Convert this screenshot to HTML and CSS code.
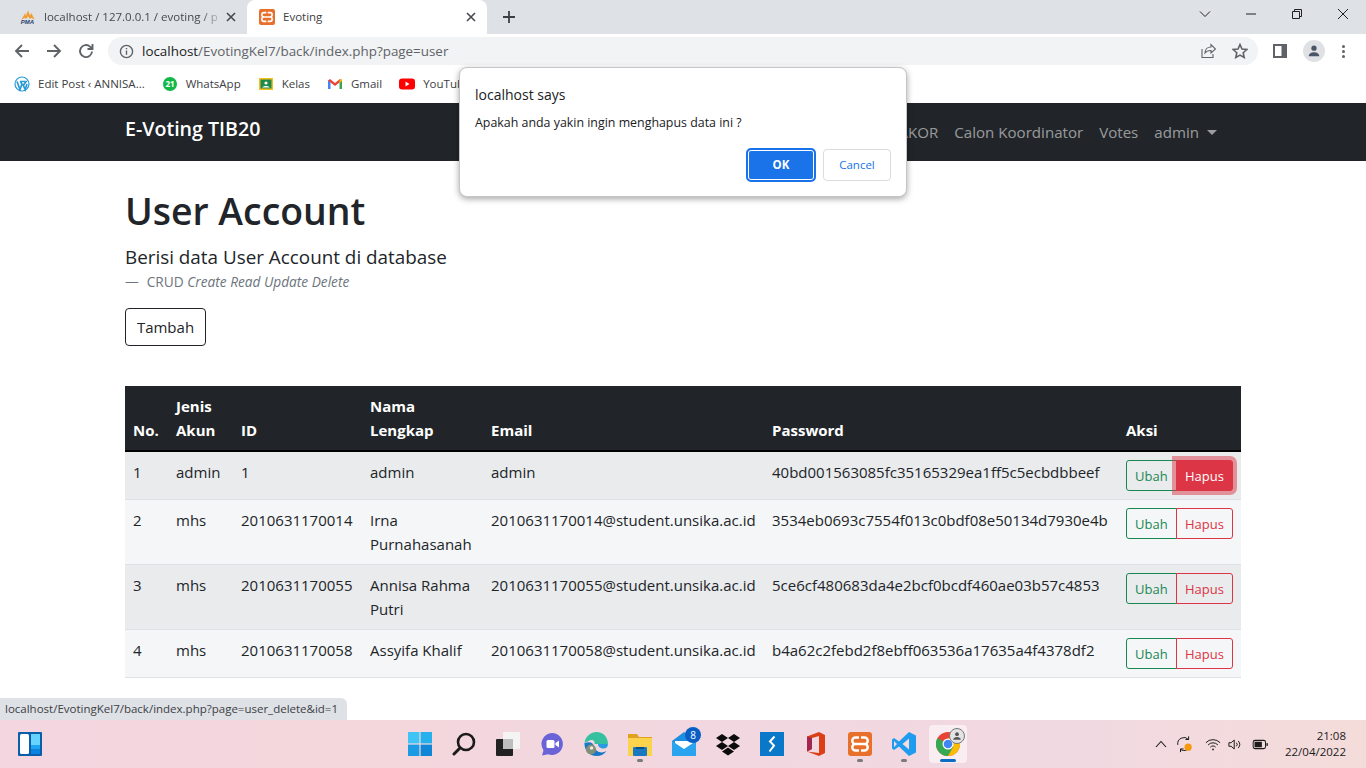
FILE: index.html
```html
<!DOCTYPE html>
<html lang="en">
<head>
    <meta charset="UTF-8">
    <title>Evoting</title>
    <link rel="stylesheet" href="styles.css">
</head>
<body>
<div class="screen">
    <div class="tabstrip">
        <div class="tab">
            <svg class="ico16" viewBox="0 0 24 24"><path d="M2 16 8 6l1 5 3-9 3 8 2-4 5 10-5-3-2 2-3-4-3 4-2-2z" fill="#f29b2e"/><text x="1" y="23" class="pma-text">PMA</text></svg>
            <span class="tab-title fade">localhost / 127.0.0.1 / evoting / p</span>
            <svg class="tab-x" viewBox="0 0 10 10"><path d="M1 1l8 8M9 1l-8 8"/></svg>
        </div>
        <div class="tab tab-active">
            <svg class="ico16" viewBox="0 0 24 24"><rect width="24" height="24" rx="3" fill="#e8702a"/><path class="xampp-mark" d="M11 5.500H7.500a3 3 0 0 0 0 6.500 3 3 0 0 0 0 6.500H11M13 5.500h3.500a3 3 0 0 1 0 6.500 3 3 0 0 1 0 6.500H13M7.500 12h9"/></svg>
            <span class="tab-title">Evoting</span>
            <svg class="tab-x" viewBox="0 0 10 10"><path d="M1 1l8 8M9 1l-8 8"/></svg>
        </div>
        <svg class="tab-new" viewBox="0 0 12 12"><path d="M6 0v12M0 6h12"/></svg>
        <div class="win-controls">
            <svg class="win-ico" viewBox="0 0 12 12"><path d="M1 3.500l5 5 5-5"/></svg>
            <svg class="win-ico" viewBox="0 0 12 12"><path d="M1 6h10"/></svg>
            <svg class="win-ico" viewBox="0 0 12 12"><path d="M1.500 3.500h7v7h-7zM3.500 3.500V1.500h7v7H8.500"/></svg>
            <svg class="win-ico" viewBox="0 0 12 12"><path d="M1 1l10 10M11 1L1 11"/></svg>
        </div>
    </div>

    <div class="toolbar">
        <svg class="tool-ico" viewBox="0 0 16 16"><path d="M15 8H2M8 2L2 8l6 6"/></svg>
        <svg class="tool-ico" viewBox="0 0 16 16"><path d="M1 8h13M8 2l6 6-6 6"/></svg>
        <svg class="tool-ico" viewBox="0 0 16 16"><path d="M14 8.500A6 6 0 1 1 12 3.600L14 5.500M14.500 1v5h-5"/></svg>
        <div class="omnibox">
            <svg class="info-ico" viewBox="0 0 16 16"><circle cx="8" cy="8" r="6.500"/><path d="M8 7v4.500M8 4.200v1.400"/></svg>
            <span class="url"><b>localhost</b>/EvotingKel7/back/index.php?page=user</span>
            <svg class="omni-share" viewBox="0 0 16 16"><path d="M2 6v8.500h11V11M5 10c0-4 3-6 6-6V1.500L15.500 6 11 10V7.500c-3 0-5 1-6 2.500z"/></svg>
            <svg class="omni-star" viewBox="0 0 16 16"><path d="M8 1.500l2 4.500 4.800.5-3.600 3.200 1 4.800L8 12.100l-4.200 2.400 1-4.800L1.200 6.500 6 6z"/></svg>
        </div>
        <svg class="side-ico" viewBox="0 0 14 14"><path d="M0 0h14v14H0z" fill="#5f6368"/><path d="M2 2h6.500v10H2z" fill="#fff"/></svg>
        <div class="avatar">
            <svg viewBox="0 0 16 16"><circle cx="8" cy="4.800" r="3"/><path d="M2 14c0-3 3-4.500 6-4.500s6 1.500 6 4.500z"/></svg>
        </div>
        <div class="kebab"><i></i><i></i><i></i></div>
    </div>

    <div class="bookmarks">
        <div class="bookmark">
            <svg class="ico16" viewBox="0 0 16 16"><circle cx="8" cy="8" r="7" fill="none" stroke="#2a9ad6" stroke-width="1.200"/><path d="M3 5.500l3 8 1.800-5-1-3H12l-2 3-1 0 2.200 5L13 8" fill="none" stroke="#2a9ad6" stroke-width="1.700"/></svg>
            <span>Edit Post ‹ ANNISA...</span>
        </div>
        <div class="bookmark">
            <svg class="ico16" viewBox="0 0 16 16"><circle cx="8" cy="8" r="7" fill="#12b847"/><text x="8" y="10.800" class="wa-text">21</text></svg>
            <span>WhatsApp</span>
        </div>
        <div class="bookmark">
            <svg class="ico16" viewBox="0 0 16 16"><rect x="1" y="2" width="14" height="12" fill="#f7bf1e"/><rect x="2.500" y="3.500" width="11" height="9" fill="#20894a"/><circle cx="8" cy="7" r="1.600" fill="#fff"/><path d="M4.500 11.500c0-2 7-2 7 0z" fill="#fff"/></svg>
            <span>Kelas</span>
        </div>
        <div class="bookmark">
            <svg class="ico16" viewBox="0 0 16 16"><path d="M1 13V4l2.500 2v7z" fill="#4285f4"/><path d="M15 13V4l-2.500 2v7z" fill="#34a853"/><path d="M1 4.500 3 3l5 4 5-4 2 1.500L8 10z" fill="#ea4335"/><path d="M12.500 4l2.500-1v2l-2.500 2z" fill="#fbbc04"/></svg>
            <span>Gmail</span>
        </div>
        <div class="bookmark">
            <svg class="ico16" viewBox="0 0 16 16"><rect y="2.500" width="16" height="11" rx="3" fill="#f00"/><path d="M6.500 5.500v5l4-2.500z" fill="#fff"/></svg>
            <span>YouTube</span>
        </div>
    </div>

    <div class="page">
        <nav class="topnav">
            <div class="container topnav-inner">
                <a class="brand">E-Voting TIB20</a>
                <div class="nav-links">
                    <a>Calon KAKOR</a>
                    <a>Calon Koordinator</a>
                    <a>Votes</a>
                    <a class="nav-drop">admin</a>
                </div>
            </div>
        </nav>

        <main class="container">
            <h1>User Account</h1>
            <p class="lead">Berisi data User Account di database</p>
            <p class="caption"><span class="dash">—</span>CRUD <em>Create Read Update Delete</em></p>
            <a class="btn-add">Tambah</a>

            <table class="data-table">
                <colgroup>
                    <col class="c-no"><col class="c-type"><col class="c-id"><col class="c-name"><col class="c-mail"><col class="c-pass"><col class="c-act">
                </colgroup>
                <thead>
                    <tr><th>No.</th><th>Jenis Akun</th><th>ID</th><th>Nama Lengkap</th><th>Email</th><th>Password</th><th>Aksi</th></tr>
                </thead>
                <tbody>
                    <tr>
                        <td>1</td><td>admin</td><td>1</td><td>admin</td><td>admin</td>
                        <td>40bd001563085fc35165329ea1ff5c5ecbdbbeef</td>
                        <td><div class="btn-group"><a class="btn-edit">Ubah</a><a class="btn-del is-hover">Hapus</a></div></td>
                    </tr>
                    <tr>
                        <td>2</td><td>mhs</td><td>2010631170014</td><td>Irna Purnahasanah</td><td>2010631170014@student.unsika.ac.id</td>
                        <td>3534eb0693c7554f013c0bdf08e50134d7930e4b</td>
                        <td><div class="btn-group"><a class="btn-edit">Ubah</a><a class="btn-del">Hapus</a></div></td>
                    </tr>
                    <tr>
                        <td>3</td><td>mhs</td><td>2010631170055</td><td>Annisa Rahma Putri</td><td>2010631170055@student.unsika.ac.id</td>
                        <td>5ce6cf480683da4e2bcf0bcdf460ae03b57c4853</td>
                        <td><div class="btn-group"><a class="btn-edit">Ubah</a><a class="btn-del">Hapus</a></div></td>
                    </tr>
                    <tr>
                        <td>4</td><td>mhs</td><td>2010631170058</td><td>Assyifa Khalif</td><td>2010631170058@student.unsika.ac.id</td>
                        <td>b4a62c2febd2f8ebff063536a17635a4f4378df2</td>
                        <td><div class="btn-group"><a class="btn-edit">Ubah</a><a class="btn-del">Hapus</a></div></td>
                    </tr>
                </tbody>
            </table>
        </main>
        <div class="status-bubble">localhost/EvotingKel7/back/index.php?page=user_delete&amp;id=1</div>
    </div>

    <div class="taskbar">
        <div class="task-left">
            <svg class="task-ico" viewBox="0 0 24 24"><rect width="24" height="24" rx="1" fill="#0a5fa8"/><rect x="2" y="2" width="9" height="20" rx="1.500" fill="#fff"/><rect x="13" y="2" width="9" height="11" fill="#66d4ff"/><rect x="13" y="13" width="9" height="4.500" fill="#1ea3f2"/><rect x="13" y="17.500" width="9" height="4.500" fill="#0a84e0"/></svg>
        </div>
        <div class="task-center">
            <div class="task-item"><svg class="task-ico" viewBox="0 0 24 24"><rect width="11.400" height="11.400" fill="#3fc4f5"/><rect x="12.600" width="11.400" height="11.400" fill="#27b0ee"/><rect y="12.600" width="11.400" height="11.400" fill="#1a9be4"/><rect x="12.600" y="12.600" width="11.400" height="11.400" fill="#0f86d6"/></svg></div>
            <div class="task-item"><svg class="task-ico" viewBox="0 0 24 24"><circle cx="14" cy="10" r="8" fill="none" stroke="#1b1b1b" stroke-width="2.600"/><path d="M8 16l-6 6" stroke="#1b1b1b" stroke-width="3" stroke-linecap="round"/></svg></div>
            <div class="task-item"><svg class="task-ico" viewBox="0 0 24 24"><rect x="0" y="7" width="17" height="17" rx="1" fill="#222"/><rect x="7" y="0" width="17" height="17" rx="1" fill="#f4f4f4"/><rect x="7" y="7" width="10" height="10" fill="#bdbdbd"/></svg></div>
            <div class="task-item"><svg class="task-ico" viewBox="0 0 24 24"><path d="M12 1a11 11 0 1 1-4 21.300L2 23.500l1.500-5.300A11 11 0 0 1 12 1z" fill="#6a63d8"/><rect x="6.500" y="8" width="8" height="8" rx="1.500" fill="#fff"/><path d="M15.500 11l3.500-2.500v7L15.500 13z" fill="#fff"/></svg></div>
            <div class="task-item"><svg class="task-ico" viewBox="0 0 24 24"><path d="M0.500 11C1.500 4 7 0 12.500 0 19.500 0 24 5.500 24 12H10.500c1-3-2-5-5-3.500-2 1-4 1.500-5 2.500z" fill="#35c1a0"/><path d="M24 12c0 3-2 4.500-4.500 4.500-3 0-5.500-1.500-5.500-4.500z" fill="#2a9be0"/><path d="M0.500 11c-.5 7 5 13 12 13 4.500 0 8-2 10-5-5 3-11 1-12.500-5-1-3-4-5-9.500-3z" fill="#1678c8"/><circle cx="7" cy="17.500" r="5" fill="#7f8f78"/><circle cx="7.500" cy="16" r="1.800" fill="#e9e9e0"/></svg></div>
            <div class="task-item has-dot"><svg class="task-ico" viewBox="0 0 24 24"><path d="M0 2h9l2 3h13v5H0z" fill="#e0a020"/><rect y="6" width="24" height="18" fill="#fbd34d"/><rect x="5" y="15" width="14" height="9" rx="1" fill="#1a78c2"/><rect x="8" y="15" width="8" height="2" fill="#0a4f8a"/></svg></div>
            <div class="task-item"><svg class="task-ico" viewBox="0 0 24 24"><path d="M0 9 12 0l12 9v15H0z" fill="#1c8fe0"/><path d="M3 9h18v6l-9 5-9-5z" fill="#fff"/><path d="M0 9l12 8 12-8v15H0z" fill="#2aa4ef"/></svg><span class="badge">8</span></div>
            <div class="task-item"><svg class="task-ico" viewBox="0 0 24 24"><path d="M6 2l6 4-6 4-6-4zM18 2l6 4-6 4-6-4zM6 10l6 4-6 4-6-4zM18 10l6 4-6 4-6-4zM6 19.500l6-4 6 4-6 4z" fill="#0c0c0c"/></svg></div>
            <div class="task-item"><svg class="task-ico" viewBox="0 0 24 24"><rect width="24" height="24" fill="#0a78c8"/><path d="M14.500 4.500 10 9.500l4 4-4.500 6" fill="none" stroke="#fff" stroke-width="2"/></svg></div>
            <div class="task-item"><svg class="task-ico" viewBox="0 0 24 24"><path d="M3 4.500 15 0l6 3v18l-6 3-12-4.500 12 1.500V4L8 6v11l-5 2.500z" fill="#dc3e15"/><path d="M3 4.500 8 6v11l-5 2.500z" fill="#a3264f"/></svg></div>
            <div class="task-item has-dot"><svg class="task-ico" viewBox="0 0 24 24"><rect width="24" height="24" rx="3" fill="#e8702a"/><path class="xampp-mark" d="M11 5.500H7.500a3 3 0 0 0 0 6.500 3 3 0 0 0 0 6.500H11M13 5.500h3.500a3 3 0 0 1 0 6.500 3 3 0 0 1 0 6.500H13M7.500 12h9"/></svg></div>
            <div class="task-item has-dot"><svg class="task-ico" viewBox="0 0 24 24"><path d="M17 0l7 3.500v17L17 24 7 14.500 2 18l-2-1.500V7.500L2 6l5 3.500z" fill="#1f9cf0"/><path d="M17 6.500 10.500 12l6.500 5.500zM2 9v6l3-3z" fill="#f4dbe0"/></svg></div>
            <div class="task-item is-active"><svg class="task-ico" viewBox="0 0 24 24"><circle cx="12" cy="12" r="12" fill="#ea4335"/><path d="M12 12 1.600 6A12 12 0 0 0 12 24l6-10z" fill="#34a853"/><path d="M12 6h10.400A12 12 0 0 1 12 24l5.200-9z" fill="#fbbc04"/><circle cx="12" cy="12" r="5.500" fill="#fff"/><circle cx="12" cy="12" r="4.300" fill="#4285f4"/></svg><span class="profile-badge"><svg viewBox="0 0 16 16"><circle cx="8" cy="5" r="3"/><path d="M2 14c0-3 3-4.500 6-4.500s6 1.500 6 4.500z"/></svg></span></div>
        </div>
        <div class="tray">
            <svg class="tray-chevron" viewBox="0 0 12 8"><path d="M1 7l5-5.500L11 7"/></svg>
            <svg class="tray-sync" viewBox="0 0 20 20"><path d="M2 11a7 7 0 0 1 12-6M14 1.500V5h-3.500M16 11a7 7 0 0 1-11 5M5 19v-3.500h3.500"/><circle cx="13.500" cy="13.500" r="4" class="sync-dot"/></svg>
            <svg class="tray-wifi" viewBox="0 0 18 14"><path d="M1 5a11 11 0 0 1 16 0M3.500 7.500a7.500 7.500 0 0 1 11 0M6 10a4 4 0 0 1 6 0"/><circle cx="9" cy="12.500" r="1" class="fill-dark"/></svg>
            <svg class="tray-vol" viewBox="0 0 18 14"><path d="M1 5v4h2.500L7 12V2L3.500 5zM9.500 5a3 3 0 0 1 0 4M11.500 3a6 6 0 0 1 0 8"/></svg>
            <svg class="tray-batt" viewBox="0 0 18 12"><rect x="1" y="1.500" width="13.500" height="9" rx="2" class="batt-shell"/><rect x="2.500" y="3" width="8" height="6" class="fill-dark"/><rect x="15.500" y="4.500" width="1.500" height="3" class="fill-dark"/></svg>
            <div class="clock"><span>21:08</span><span>22/04/2022</span></div>
        </div>
    </div>

    <div class="js-dialog">
        <div class="dlg-title">localhost says</div>
        <div class="dlg-msg">Apakah anda yakin ingin menghapus data ini ?</div>
        <div class="dlg-actions">
            <button class="dlg-ok">OK</button>
            <button class="dlg-cancel">Cancel</button>
        </div>
    </div>
</div>
</body>
</html>
```

FILE: styles.css
```css
* {
    margin: 0;
    padding: 0;
    box-sizing: border-box;
}

body {
    font-family: 'Open Sans', 'Noto Sans', sans-serif;
    font-size: 15px;
    line-height: 24px;
    color: #212529;
    background: #fff;
    overflow: hidden;
}

svg {
    display: block;
    flex: none;
}

.screen {
    position: relative;
    display: flex;
    flex-direction: column;
    width: 1366px;
    height: 768px;
    overflow: hidden;
}

/* browser chrome */
.tabstrip {
    display: flex;
    align-items: flex-end;
    height: 34px;
    padding-left: 8px;
    background: #dee1e6;
}

.tab {
    display: flex;
    align-items: center;
    gap: 8px;
    width: 239px;
    height: 34px;
    padding: 0 11px 0 12px;
    color: #45494f;
    font-size: 11.5px;
    line-height: 16px;
}

.tab-active {
    width: 240px;
    background: #fff;
    border-radius: 8px 8px 0 0;
    color: #3c4043;
}

.ico16 {
    width: 16px;
    height: 16px;
}

.pma-text {
    font-family: 'Liberation Sans', sans-serif;
    font-size: 9px;
    font-weight: 700;
    font-style: italic;
    fill: #2a3f6e;
}

.xampp-mark {
    fill: none;
    stroke: #fff;
    stroke-width: 2.4;
}

.tab-title {
    flex: 1;
    white-space: nowrap;
}

.fade {
    -webkit-mask-image: linear-gradient(90deg, #000 90%, rgba(0, 0, 0, 0.25) 100%);
    mask-image: linear-gradient(90deg, #000 90%, rgba(0, 0, 0, 0.25) 100%);
}

.tab-x {
    width: 10px;
    height: 10px;
    fill: none;
    stroke: #45494f;
    stroke-width: 1.6;
}

.tab-new {
    width: 12px;
    height: 12px;
    margin: 0 0 11px 16px;
    fill: none;
    stroke: #3c4043;
    stroke-width: 1.8;
}

.win-controls {
    display: flex;
    margin-left: auto;
    align-self: flex-start;
}

.win-ico {
    width: 46px;
    height: 28px;
    padding: 8px 17px;
    fill: none;
    stroke: #202124;
    stroke-width: 1;
}

.toolbar {
    display: flex;
    align-items: center;
    height: 34px;
    padding-left: 14px;
    background: #fff;
}

.tool-ico {
    width: 16px;
    height: 16px;
    margin-right: 16px;
    fill: none;
    stroke: #5f6368;
    stroke-width: 1.9;
}

.omnibox {
    display: flex;
    align-items: center;
    width: 1150px;
    height: 28px;
    margin-left: -2px;
    padding-left: 11px;
    background: #f1f3f4;
    border-radius: 14px;
}

.info-ico {
    width: 15px;
    height: 15px;
    margin-right: 8px;
    fill: none;
    stroke: #5f6368;
    stroke-width: 1.5;
}

.url {
    flex: 1;
    font-size: 13.4px;
    color: #5f6368;
}

.url b {
    font-weight: 400;
    color: #202124;
}

.omni-share {
    width: 16px;
    height: 16px;
    margin-right: 16px;
    fill: none;
    stroke: #5f6368;
    stroke-width: 1.1;
}

.omni-star {
    width: 16px;
    height: 16px;
    margin-right: 10px;
    fill: none;
    stroke: #5f6368;
    stroke-width: 1.6;
}

.side-ico {
    width: 14px;
    height: 14px;
    margin-left: 15px;
}

.avatar {
    display: flex;
    align-items: center;
    justify-content: center;
    width: 22px;
    height: 22px;
    margin-left: 16px;
    background: #dfe1e5;
    border-radius: 50%;
}

.avatar svg {
    width: 14px;
    height: 14px;
    fill: #4a5568;
}

.kebab {
    display: flex;
    flex-direction: column;
    gap: 2px;
    margin-left: 17px;
}

.kebab i {
    width: 3px;
    height: 3px;
    background: #5f6368;
    border-radius: 50%;
}

.bookmarks {
    display: flex;
    align-items: center;
    height: 35px;
    padding: 0 0 3px 14px;
    background: #fff;
    font-size: 11.5px;
    color: #3c4043;
}

.bookmark {
    display: flex;
    align-items: center;
    gap: 8px;
    margin-right: 17px;
    white-space: nowrap;
}

.wa-text {
    font-family: 'Open Sans', sans-serif;
    font-size: 8px;
    font-weight: 700;
    fill: #fff;
    text-anchor: middle;
}

/* page */
.page {
    position: relative;
    flex: 1;
    overflow: hidden;
}

.container {
    width: 1140px;
    margin: 0 auto;
    padding: 0 12px;
}

.topnav {
    height: 58px;
    background: #212529;
}

.topnav-inner {
    display: flex;
    align-items: center;
    justify-content: space-between;
    height: 100%;
}

.brand {
    margin-top: -6px;
    color: #fff;
    font-size: 19.6px;
    font-weight: 600;
}

.nav-links {
    display: flex;
    gap: 16px;
    padding-right: 42px;
    font-size: 15.1px;
    color: rgba(255, 255, 255, 0.55);
}

.nav-drop {
    position: relative;
}

.nav-drop::after {
    content: "";
    position: absolute;
    top: 10px;
    right: -18px;
    border-top: 5px solid rgba(255, 255, 255, 0.55);
    border-left: 5px solid transparent;
    border-right: 5px solid transparent;
}

h1 {
    margin-top: 26px;
    font-size: 37.4px;
    font-weight: 600;
    line-height: 48px;
}

.lead {
    margin-top: 7px;
    font-size: 18.85px;
    line-height: 30px;
}

.caption {
    font-size: 13.7px;
    line-height: 20px;
    color: #6c757d;
}

.dash {
    margin-right: 8px;
}

.btn-add {
    display: block;
    width: 81px;
    height: 38px;
    margin-top: 16px;
    border: 1px solid #212529;
    border-radius: 4px;
    line-height: 36px;
    text-align: center;
}

.data-table {
    width: 1116px;
    margin-top: 40px;
    border-collapse: collapse;
    table-layout: fixed;
}

.c-no { width: 43px; }
.c-type { width: 65px; }
.c-id { width: 129px; }
.c-name { width: 121px; }
.c-mail { width: 281px; }
.c-pass { width: 354px; }
.c-act { width: 123px; }

.data-table th {
    padding: 8px;
    background: #212529;
    color: #fff;
    font-weight: 700;
    text-align: left;
    vertical-align: bottom;
    border-bottom: 2px solid #000;
}

.data-table td {
    padding: 8px;
    vertical-align: top;
    border-bottom: 1px solid #dee2e6;
    background: #f5f6f7;
}

.data-table tbody tr:nth-child(odd) td {
    background: #e9ebed;
}

.btn-group {
    display: flex;
    height: 31px;
    font-size: 13px;
    line-height: 29px;
}

.btn-edit,
.btn-del {
    padding: 1px 8px 0;
    border: 1px solid;
}

.btn-edit {
    width: 51px;
    color: #198754;
    border-color: #198754;
    border-radius: 3px 0 0 3px;
}

.btn-del {
    width: 57px;
    margin-left: -1px;
    color: #dc3545;
    border-color: #dc3545;
    border-radius: 0 3px 3px 0;
}

.btn-del.is-hover {
    position: relative;
    background: #dc3545;
    color: #fff;
    box-shadow: 0 0 0 4px rgba(220, 53, 69, 0.5);
}

.status-bubble {
    position: absolute;
    left: 0;
    bottom: 0;
    width: 347px;
    height: 22px;
    padding-left: 5px;
    background: #dee1e6;
    border-radius: 0 6px 0 0;
    font-size: 11.5px;
    line-height: 22px;
    color: #3c4043;
    white-space: nowrap;
}

/* windows taskbar */
.taskbar {
    display: grid;
    grid-template-columns: 398px 572px 1fr;
    align-items: center;
    height: 48px;
    background: linear-gradient(90deg, #f3d6e0 0%, #f4d7dc 25%, #f2d7e0 50%, #f1d9e1 80%, #f4dcda 100%);
}

.task-left {
    padding-left: 18px;
}

.task-ico {
    width: 24px;
    height: 24px;
}

.task-center {
    display: flex;
}

.task-item {
    position: relative;
    display: flex;
    align-items: center;
    justify-content: center;
    width: 44px;
    height: 38px;
    border-radius: 4px;
}

.has-dot::after,
.is-active::after {
    content: "";
    position: absolute;
    left: 19px;
    bottom: 1px;
    width: 6px;
    height: 3px;
    background: #7a7a7a;
    border-radius: 2px;
}

.is-active {
    width: 38px;
    margin-left: 3px;
    background: rgba(255, 255, 255, 0.55);
}

.is-active::after {
    left: 11px;
    width: 16px;
    background: #0a6cc4;
}

.badge {
    position: absolute;
    top: 2px;
    right: 5px;
    width: 16px;
    height: 16px;
    background: #0a5fc4;
    border-radius: 50%;
    color: #fff;
    font-size: 10px;
    line-height: 16px;
    text-align: center;
}

.profile-badge {
    position: absolute;
    top: 3px;
    right: 2px;
    width: 16px;
    height: 16px;
    padding: 2px;
    background: #e3e3e3;
    border: 1px solid #777;
    border-radius: 50%;
}

.profile-badge svg {
    width: 100%;
    height: 100%;
    fill: #555;
}

.tray {
    display: flex;
    align-items: center;
    padding-left: 185px;
    color: #1b1b1b;
}

.tray svg {
    fill: none;
    stroke: #1b1b1b;
    stroke-width: 1.1;
}

.tray-chevron {
    width: 12px;
    height: 8px;
}

.tray-sync {
    width: 18px;
    height: 18px;
    margin-left: 9px;
}

.tray .sync-dot {
    fill: #f59a0c;
    stroke: none;
}

.tray-wifi {
    width: 16px;
    height: 13px;
    margin-left: 11px;
}

.tray-vol {
    width: 16px;
    height: 13px;
    margin-left: 7px;
}

.tray-batt {
    width: 17px;
    height: 11px;
    margin-left: 8px;
}

.tray .fill-dark {
    fill: #1b1b1b;
    stroke: none;
}

.clock {
    display: flex;
    flex-direction: column;
    align-items: flex-end;
    width: 76px;
    margin-left: 1px;
    font-size: 11.5px;
    line-height: 16px;
}

/* javascript confirm box */
.js-dialog {
    position: absolute;
    top: 67px;
    left: 459px;
    width: 448px;
    height: 130px;
    padding: 15px;
    background: #fff;
    border: 1px solid #c4c6c9;
    border-radius: 8px;
    box-shadow: 0 2px 6px rgba(0, 0, 0, 0.35);
}

.dlg-title {
    font-size: 14px;
    line-height: 24px;
    color: #202124;
}

.dlg-msg {
    margin-top: 7px;
    font-size: 12.4px;
    line-height: 18px;
    color: #202124;
}

.dlg-actions {
    display: flex;
    justify-content: flex-end;
    align-items: center;
    gap: 8px;
    margin-top: 17px;
}

.dlg-ok,
.dlg-cancel {
    width: 68px;
    height: 32px;
    padding-bottom: 2px;
    font-family: inherit;
    font-size: 11.5px;
    border-radius: 4px;
}

.dlg-ok {
    width: 70px;
    height: 34px;
    margin: -1px -1px;
    background: #1a73e8;
    border: 2px solid #1a73e8;
    border-radius: 5px;
    box-shadow: inset 0 0 0 1px #fff;
    color: #fff;
    font-weight: 700;
}

.dlg-cancel {
    background: #fff;
    border: 1px solid #dadce0;
    color: #1a73e8;
}
```
